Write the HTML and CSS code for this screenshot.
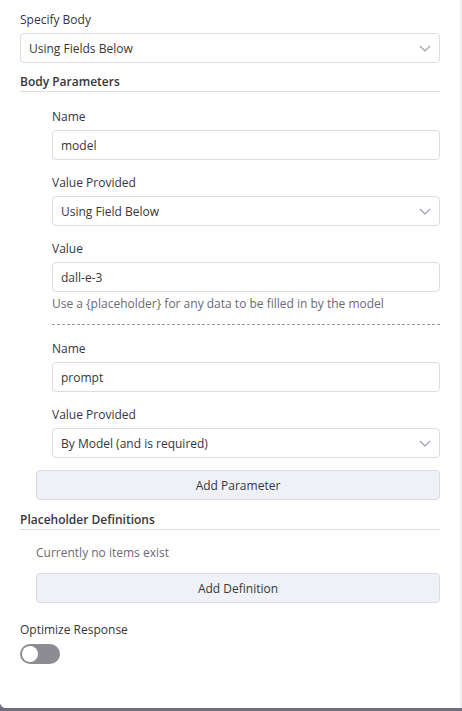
FILE: index.html
```html
<!DOCTYPE html>
<html>
<head>
<meta charset="utf-8">
<link rel="stylesheet" href="styles.css">
</head>
<body>
<div class="frame">
  <div class="panel">
    <div class="field">
      <div class="label">Specify Body</div>
      <div class="control select"><span>Using Fields Below</span><svg class="chev" width="12" height="7" viewBox="0 0 12 7"><path d="M1 1l5 5 5-5" fill="none" stroke="#9a9aa8" stroke-width="1.1"/></svg></div>
    </div>

    <div class="section-head body-head">Body Parameters</div>

    <div class="params">
      <div class="field">
        <div class="label">Name</div>
        <div class="control"><span>model</span></div>
      </div>
      <div class="field gap">
        <div class="label">Value Provided</div>
        <div class="control select"><span>Using Field Below</span><svg class="chev" width="12" height="7" viewBox="0 0 12 7"><path d="M1 1l5 5 5-5" fill="none" stroke="#9a9aa8" stroke-width="1.1"/></svg></div>
      </div>
      <div class="field gap">
        <div class="label">Value</div>
        <div class="control"><span>dall-e-3</span></div>
        <div class="help">Use a {placeholder} for any data to be filled in by the model</div>
      </div>
      <div class="divider"></div>
      <div class="field">
        <div class="label">Name</div>
        <div class="control"><span>prompt</span></div>
      </div>
      <div class="field gap">
        <div class="label">Value Provided</div>
        <div class="control select"><span>By Model (and is required)</span><svg class="chev" width="12" height="7" viewBox="0 0 12 7"><path d="M1 1l5 5 5-5" fill="none" stroke="#9a9aa8" stroke-width="1.1"/></svg></div>
      </div>
    </div>

    <div class="button add-param">Add Parameter</div>

    <div class="section-head ph-head">Placeholder Definitions</div>
    <div class="empty">Currently no items exist</div>
    <div class="button add-def">Add Definition</div>

    <div class="field opt">
      <div class="label">Optimize Response</div>
      <div class="toggle"><span class="knob"></span></div>
    </div>
  </div>
</div>
</body>
</html>
```

FILE: styles.css
```css
html, body {
  margin: 0;
  padding: 0;
}
body {
  width: 462px;
  height: 711px;
  background: #6e6e80;
  font-family: "Open Sans", "Noto Sans", sans-serif;
  font-size: 12px;
  color: #36363c;
  overflow: hidden;
}
.frame {
  display: flex;
  height: 708px;
  background: #f0f0f2;
  border-bottom-left-radius: 6px;
}
.panel {
  height: 708px;
  box-sizing: border-box;
  padding: 11px 20px 0 20px;
  background: #ffffff;
  border-bottom-left-radius: 6px;
  display: flex;
  flex-direction: column;
  flex: none;
  width: 460px;
}
.field {
  display: flex;
  flex-direction: column;
}
.field.gap {
  margin-top: 14px;
}
.label {
  line-height: 16px;
  height: 16px;
  padding-top: 1px;
  margin-bottom: 5px;
}
.control {
  height: 30px;
  box-sizing: border-box;
  border: 1px solid #dcdce6;
  border-radius: 4px;
  display: flex;
  align-items: center;
  padding: 0 8px;
  background: #fff;
}
.select {
  justify-content: space-between;
  padding-right: 8px;
}
.chev {
  display: block;
}
.help {
  line-height: 16px;
  margin-top: 4px;
  color: #6a6a72;
}
.section-head {
  font-weight: 600;
  line-height: 16px;
  padding-top: 1px;
  padding-bottom: 1px;
  border-bottom: 1px solid #dcdce6;
}
.body-head {
  margin-top: 10px;
}
.params {
  display: flex;
  flex-direction: column;
  margin: 16px 0 0 32px;
}
.divider {
  border-top: 1px dashed #9a9aa2;
  margin: 12px 0 15px 0;
}
.button {
  margin-left: 16px;
  height: 30px;
  box-sizing: border-box;
  border: 1px solid #d8dae4;
  border-radius: 4px;
  background: #f0f1f6;
  display: flex;
  align-items: center;
  justify-content: center;
}
.add-param {
  margin-top: 12px;
}
.ph-head {
  margin-top: 11px;
}
.empty {
  margin: 15px 0 0 16px;
  line-height: 16px;
  color: #6a6a72;
}
.add-def {
  margin-top: 12px;
}
.opt {
  margin-top: 18px;
}
.opt .label {
  margin-bottom: 6px;
}
.toggle {
  width: 40px;
  height: 20px;
  border-radius: 10px;
  background: #8c8c92;
  position: relative;
}
.knob {
  position: absolute;
  left: 2px;
  top: 2px;
  width: 16px;
  height: 16px;
  border-radius: 50%;
  background: #fff;
}
```
